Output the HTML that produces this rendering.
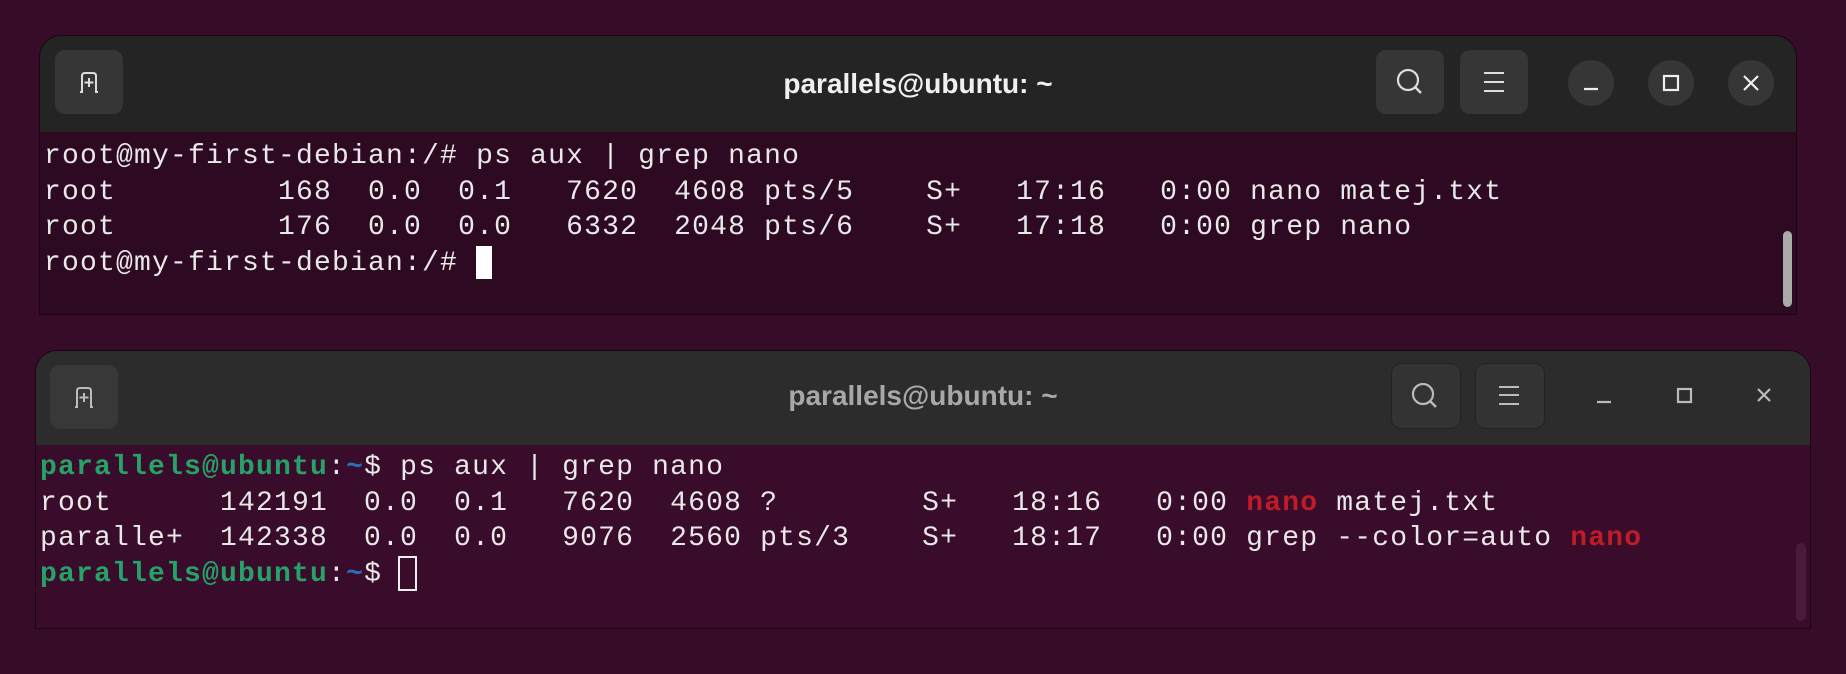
<!DOCTYPE html>
<html><head><meta charset="utf-8"><style>
body{margin:0;width:1846px;height:674px;background:#360c28;overflow:hidden;position:relative;font-family:"Liberation Sans",sans-serif}
.win{position:absolute;border-radius:22px 22px 0 0;overflow:hidden;border:1px solid #1a0612}
.tb{position:absolute;left:0;right:0;top:0}
.btn{position:absolute;border-radius:10px;width:68px;height:64px}
.circ{position:absolute;width:46px;height:46px;border-radius:50%;background:#363636}
.title{position:absolute;left:0;right:0;text-align:center;font-weight:bold;font-size:28px}
pre{position:absolute;margin:0;font-family:"Liberation Mono",monospace;font-size:28px;letter-spacing:1.2px;line-height:35.5px;color:#e8e8e8}
.g{color:#26a269;font-weight:bold}.b{color:#2a6ebd;font-weight:bold}.r{color:#c01c28;font-weight:bold}
svg{position:absolute}
</style></head><body>

<div class="win" style="left:39px;top:35px;width:1756px;height:278px;background:#2d0922">
 <div class="tb" style="height:96px;background:#242424"></div>
 <div class="btn" style="left:15px;top:14px;background:#363636"></div>
 <svg style="left:15px;top:14px" width="68" height="64" viewBox="0 0 68 64"><path d="M25 42 h2 v-16 q0-3 3-3 h8 q3 0 3 3 v16 h2" fill="none" stroke="#ddd" stroke-width="2"/><path d="M34 28v9M29.5 32.5h9" stroke="#ddd" stroke-width="2"/></svg>
 <div class="title" style="top:32px;color:#f0f0f0">parallels@ubuntu: ~</div>
 <div class="btn" style="left:1336px;top:14px;background:#363636"></div>
 <svg style="left:1336px;top:14px" width="68" height="64"><circle cx="32" cy="30" r="10" fill="none" stroke="#ddd" stroke-width="2.2"/><path d="M39 37l6 6" stroke="#ddd" stroke-width="2.4"/></svg>
 <div class="btn" style="left:1420px;top:14px;background:#363636"></div>
 <svg style="left:1420px;top:14px" width="68" height="64"><path d="M24 23h20M24 32h20M24 41h20" stroke="#ddd" stroke-width="2"/></svg>
 <div class="circ" style="left:1528px;top:24px"></div>
 <div class="circ" style="left:1608px;top:24px"></div>
 <div class="circ" style="left:1688px;top:24px"></div>
 <svg style="left:1528px;top:24px" width="46" height="46"><path d="M16 29h14" stroke="#eee" stroke-width="2.2"/></svg>
 <svg style="left:1608px;top:24px" width="46" height="46"><rect x="16" y="16" width="14" height="14" fill="none" stroke="#eee" stroke-width="2.2"/></svg>
 <svg style="left:1688px;top:24px" width="46" height="46"><path d="M16 16l14 14M30 16l-14 14" stroke="#eee" stroke-width="2.2"/></svg>
 <pre style="left:4px;top:103px">root@my-first-debian:/# ps aux | grep nano
root         168  0.0  0.1   7620  4608 pts/5    S+   17:16   0:00 nano matej.txt
root         176  0.0  0.0   6332  2048 pts/6    S+   17:18   0:00 grep nano
root@my-first-debian:/# </pre>
 <div style="position:absolute;left:436px;top:210px;width:16px;height:33px;background:#fff"></div>
 <div style="position:absolute;left:1743px;top:195px;width:9px;height:76px;border-radius:5px;background:#aaa"></div>
</div>

<div class="win" style="left:35px;top:350px;width:1774px;height:277px;background:#380c2a">
 <div class="tb" style="height:94px;background:#2c2c2c"></div>
 <div class="btn" style="left:14px;top:14px;background:#383838"></div>
 <svg style="left:14px;top:14px" width="68" height="64" viewBox="0 0 68 64"><path d="M25 42 h2 v-16 q0-3 3-3 h8 q3 0 3 3 v16 h2" fill="none" stroke="#bbb" stroke-width="2"/><path d="M34 28v9M29.5 32.5h9" stroke="#bbb" stroke-width="2"/></svg>
 <div class="title" style="top:29px;color:#a8a8a8">parallels@ubuntu: ~</div>
 <div class="btn" style="left:1355px;top:12px;background:#333;border:1px solid #222"></div>
 <svg style="left:1355px;top:12px" width="68" height="64"><circle cx="32" cy="31" r="10" fill="none" stroke="#bbb" stroke-width="2.2"/><path d="M39 38l6 6" stroke="#bbb" stroke-width="2.4"/></svg>
 <div class="btn" style="left:1439px;top:12px;background:#333;border:1px solid #222"></div>
 <svg style="left:1439px;top:12px" width="68" height="64"><path d="M24 24h20M24 32h20M24 41h20" stroke="#bbb" stroke-width="2"/></svg>
 <svg style="left:1545px;top:22px" width="46" height="46"><path d="M16 29h14" stroke="#bbb" stroke-width="2.2"/></svg>
 <svg style="left:1625px;top:22px" width="46" height="46"><rect x="17" y="16" width="13" height="13" fill="none" stroke="#bbb" stroke-width="2.2"/></svg>
 <svg style="left:1705px;top:22px" width="46" height="46"><path d="M17 16l12 12M29 16l-12 12" stroke="#bbb" stroke-width="2.2"/></svg>
 <pre style="left:4px;top:99px"><span class="g">parallels@ubuntu</span>:<span class="b">~</span>$ ps aux | grep nano
root      142191  0.0  0.1   7620  4608 ?        S+   18:16   0:00 <span class="r">nano</span> matej.txt
paralle+  142338  0.0  0.0   9076  2560 pts/3    S+   18:17   0:00 grep --color=auto <span class="r">nano</span>
<span class="g">parallels@ubuntu</span>:<span class="b">~</span>$ </pre>
 <div style="position:absolute;left:362px;top:205px;width:15px;height:31px;border:2px solid #eee"></div>
 <div style="position:absolute;left:1760px;top:192px;width:10px;height:78px;border-radius:5px;background:#4a1c3b"></div>
</div>
</body></html>
